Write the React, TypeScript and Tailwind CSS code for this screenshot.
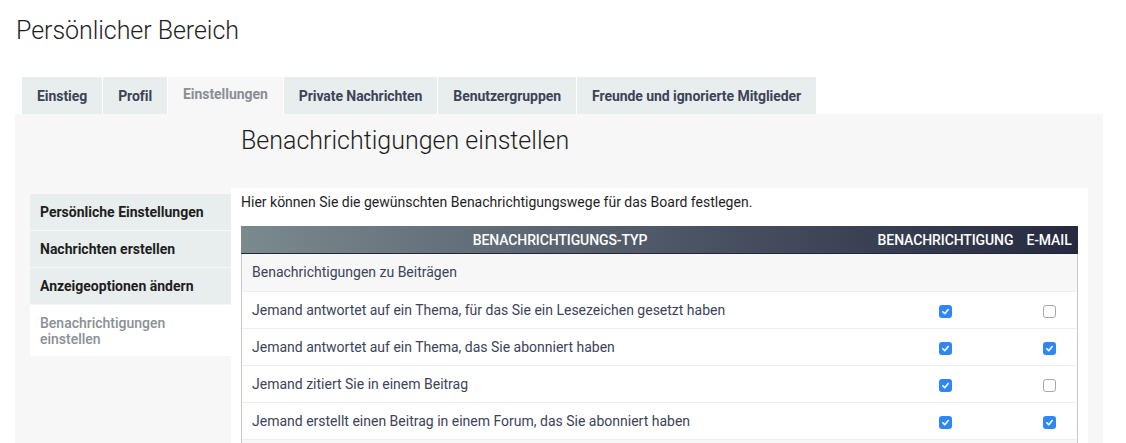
import React from "react";

const Check = ({ on }: { on: boolean }) =>
  on ? (
    <span className="inline-flex h-[13px] w-[13px] items-center justify-center rounded-[3px] bg-[#2f86f5]">
      <svg width="9" height="9" viewBox="0 0 10 10">
        <path d="M2 5.3 L4.2 7.4 L8 2.8" fill="none" stroke="white" strokeWidth="1.8" strokeLinecap="round" strokeLinejoin="round" />
      </svg>
    </span>
  ) : (
    <span className="inline-block h-[13px] w-[13px] rounded-[3px] border border-[#a8a8a8] bg-white" />
  );

const tabs = [
  "Einstieg",
  "Profil",
  "Einstellungen",
  "Private Nachrichten",
  "Benutzergruppen",
  "Freunde und ignorierte Mitglieder",
];

const rows: [string, boolean, boolean][] = [
  ["Jemand antwortet auf ein Thema, für das Sie ein Lesezeichen gesetzt haben", true, false],
  ["Jemand antwortet auf ein Thema, das Sie abonniert haben", true, true],
  ["Jemand zitiert Sie in einem Beitrag", true, false],
  ["Jemand erstellt einen Beitrag in einem Forum, das Sie abonniert haben", true, true],
  ["", false, false],
];

export default function App() {
  return (
    <div className="h-[443px] w-[1126px] overflow-hidden bg-white font-['Roboto',sans-serif]">
      <h1 className="pl-[16px] pt-[17px] text-[25px] font-light leading-[28px] tracking-[-0.05px] text-[#1e1e1e]">
        Persönlicher Bereich
      </h1>
      <div className="ml-[22px] mt-[32px] flex gap-[1px]">
        {tabs.map((t) =>
          t === "Einstellungen" ? (
            <div key={t} className="h-[37px] bg-[#f7f7f7] px-[15px] pt-[8px] text-[14px] font-bold leading-[18px] tracking-[-0.06px] text-[#8a8f94]">
              {t}
            </div>
          ) : (
            <div key={t} className="h-[37px] bg-[#e8eded] px-[15px] pt-[10px] text-[14px] font-bold leading-[18px] tracking-[-0.06px] text-[#3c4358]">
              {t}
            </div>
          )
        )}
      </div>
      <div className="ml-[15px] flex h-[400px] w-[1088px] bg-[#f7f7f7] px-[15px]">
        <div className="mt-[80px] w-[201px] shrink-0">
          {["Persönliche Einstellungen", "Nachrichten erstellen", "Anzeigeoptionen ändern"].map((n) => (
            <div key={n} className="mb-[1px] h-[36px] bg-[#e8eded] px-[10px] pt-[9px] text-[14px] font-bold leading-[18px] text-[#1e1e1e]">
              {n}
            </div>
          ))}
          <div className="bg-white px-[10px] pb-[9px] pt-[10px] text-[14px] font-medium leading-[16px] text-[#8a8f94]">
            Benachrichtigungen
            <br />
            einstellen
          </div>
        </div>
        <div className="flex w-[857px] flex-col">
          <h2 className="pl-[10px] pt-[13px] text-[25px] font-light leading-[28px] text-[#1e1e1e]">
            Benachrichtigungen einstellen
          </h2>
          <div className="mt-[33px] flex-1 bg-white px-[10px] pt-[5px]">
            <p className="text-[14px] leading-[18px] text-[#1e1e1e]">
              Hier können Sie die gewünschten Benachrichtigungswege für das Board festlegen.
            </p>
            <div className="mt-[15px] w-[837px]">
              <div className="grid h-[28px] grid-cols-[1fr_153px_56px] items-center border-b border-[#22263a] bg-gradient-to-r from-[#7b8a8e] to-[#262a40] text-[14px] font-medium leading-[18px] tracking-[-0.1px] text-white">
                <div className="pl-[10px] text-center">BENACHRICHTIGUNGS-TYP</div>
                <div className="text-center">BENACHRICHTIGUNG</div>
                <div className="pr-[2px] text-center">E-MAIL</div>
              </div>
              <div className="border-x border-[#c6c6d4]">
                <div className="flex h-[37px] items-center bg-[#f7f7f7] pl-[10px] text-[14px] text-[#3c4358]">
                  Benachrichtigungen zu Beiträgen
                </div>
                {rows.map(([label, a, b], i) => (
                  <div
                    key={i}
                    className={
                      label
                        ? "grid h-[37px] grid-cols-[1fr_152px_56px] items-center border-t border-[#eeeeee] bg-white text-[14px] text-[#3c4358]"
                        : "grid h-[37px] grid-cols-[1fr_152px_56px] items-center border-t border-[#eeeeee] bg-[#f7f7f7] text-[14px] text-[#3c4358]"
                    }
                  >
                    <div className="pl-[10px]">{label}</div>
                    <div className="flex justify-center pt-[2px]">{label && <Check on={a} />}</div>
                    <div className="flex justify-center pt-[2px]">{label && <Check on={b} />}</div>
                  </div>
                ))}
              </div>
            </div>
          </div>
        </div>
      </div>
    </div>
  );
}
